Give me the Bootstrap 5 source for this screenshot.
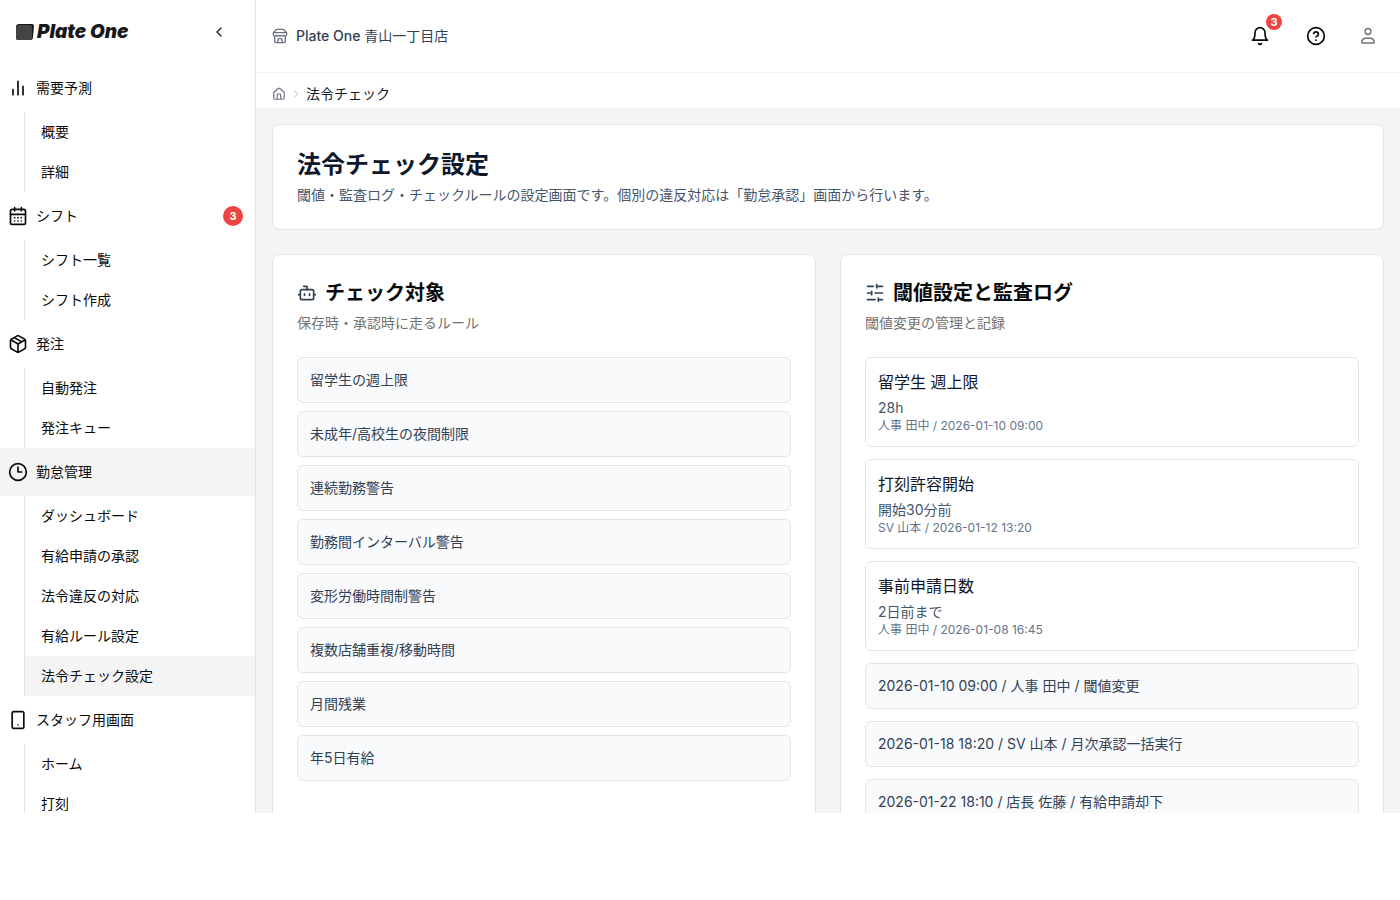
<!DOCTYPE html>
<html lang="ja">
<head>
<meta charset="utf-8">
<meta name="viewport" content="width=device-width, initial-scale=1">
<title>法令チェック設定 | Plate One</title>
<link href="https://cdn.jsdelivr.net/npm/bootstrap@5.3.0/dist/css/bootstrap.min.css" rel="stylesheet">
<style>
  :root { --line: #e5e5e5; --ink: #0f172a; --app-bottom: 87px; }
  body { font-family: Inter, "Noto Sans CJK JP", sans-serif; font-size: 14px; line-height: 20px; color: #0a0a0a; background: #fff; }
  a { color: inherit; text-decoration: none; }
  svg { fill: none; stroke: currentColor; stroke-width: 2; stroke-linecap: round; stroke-linejoin: round; flex: none; }
  .app-shell { height: calc(100vh - var(--app-bottom)); }
  .side { width: 256px; border-right: 1px solid var(--line); }
  .side-head { height: 64px; padding: 0 28px 0 16px; }
  .brand-link { gap: 3px; }
  .brand-name { font: italic 900 19px/24px Inter, sans-serif; color: #18181b; }
  .side-item { height: 48px; padding: 0 12px 0 8px; }
  .side-sub { margin-left: 24px; border-left: 1px solid var(--line); }
  .side-sub a { height: 40px; padding-left: 16px; }
  .side a:hover, .side .current { background: #f4f4f4; }
  .side .brand-link:hover { background: none; }
  .count { background: #ef4444; font-size: 11px; line-height: 20px; width: 20px; height: 20px; padding: 0; font-weight: 700; }
  .count-sm { width: 16px; height: 16px; line-height: 16px; }
  .topbar { height: 73px; padding: 0 22px 0 16px; border-bottom: 1px solid #f4f4f5; color: #334155; }
  .crumbs { padding: 11px 16px 4px; }
  .crumbs .current-page { color: var(--ink); }
  .crumb-sep { color: #b6bac3; }
  .muted-icon { color: #6b7280; }
  .user-icon { color: #737373; }
  .btn .bell-count { position: absolute; top: -12px; right: -12px; }
  .top-actions { gap: 32px; }
  .top-actions .btn { color: #0a0a0a; }
  .page { background: #f3f4f6; }
  .panel { border: 1px solid var(--line); border-radius: 8px; background: #fff; padding: 24px; }
  .panel-raised { box-shadow: 0 1px 2px rgba(0,0,0,.05); }
  h1 { font-size: 24px; line-height: 32px; font-weight: 700; color: var(--ink); }
  h2 { font-size: 20px; line-height: 28px; font-weight: 600; }
  .lede { color: #475569; }
  .desc { color: #737373; margin: 6px 0 24px; }
  .title-icon { color: #334155; }
  .rule { border: 1px solid var(--line); border-radius: 6px; padding: 12px; background: #f8fafc; color: #334155; }
  .setting { border: 1px solid var(--line); border-radius: 6px; padding: 12px; }
  .setting h3 { font-size: 16px; line-height: 24px; font-weight: 400; color: var(--ink); }
  .setting p { color: #475569; }
  .setting .stamp { font-size: 12px; line-height: 16px; color: #64748b; }
  .gap-rows { gap: 12px; }
</style>
</head>
<body>
<div class="app-shell d-flex overflow-hidden">
  <aside class="side flex-shrink-0 overflow-hidden">
    <div class="side-head d-flex align-items-center justify-content-between">
      <a href="#" class="brand-link d-flex align-items-center">
        <svg width="18" height="18" viewBox="0 0 18 18"><path d="M3 1h13q2 0 2 2l-1 11q0 3-3 3H2q-2 0-2-2V4q0-3 3-3z" fill="#18181b" stroke="none"/><rect y="2" width="16" height="15" rx="2" fill="#444" stroke="none"/></svg>
        <span class="brand-name">Plate One</span>
      </a>
      <button type="button" class="btn p-0 border-0 d-flex" aria-label="メニューを閉じる"><svg width="16" height="16" viewBox="0 0 24 24"><path d="m15 18-6-6 6-6"/></svg></button>
    </div>
    <nav aria-label="メインメニュー">
      <a href="#" class="side-item d-flex align-items-center gap-2"><svg width="20" height="20" viewBox="0 0 24 24"><path d="M12 20V4M6 20v-6M18 20V10"/></svg>需要予測</a>
      <div class="side-sub">
        <a href="#" class="d-flex align-items-center">概要</a>
        <a href="#" class="d-flex align-items-center">詳細</a>
      </div>
      <a href="#" class="side-item d-flex align-items-center gap-2"><svg width="20" height="20" viewBox="0 0 24 24"><path d="M8 2v4M16 2v4M3 10h18M8 14h.01M12 14h.01M16 14h.01M8 18h.01M12 18h.01M16 18h.01"/><rect x="3" y="4" width="18" height="18" rx="2"/></svg>シフト<span class="badge rounded-pill count ms-auto">3</span></a>
      <div class="side-sub">
        <a href="#" class="d-flex align-items-center">シフト一覧</a>
        <a href="#" class="d-flex align-items-center">シフト作成</a>
      </div>
      <a href="#" class="side-item d-flex align-items-center gap-2"><svg width="20" height="20" viewBox="0 0 24 24"><path d="M11 21.73a2 2 0 0 0 2 0l7-4A2 2 0 0 0 21 16V8a2 2 0 0 0-1-1.73l-7-4a2 2 0 0 0-2 0l-7 4A2 2 0 0 0 3 8v8a2 2 0 0 0 1 1.73zM12 22V12M3.29 7 12 12l8.71-5M7.5 4.27l9 5.15"/></svg>発注</a>
      <div class="side-sub">
        <a href="#" class="d-flex align-items-center">自動発注</a>
        <a href="#" class="d-flex align-items-center">発注キュー</a>
      </div>
      <a href="#" class="side-item current d-flex align-items-center gap-2"><svg width="20" height="20" viewBox="0 0 24 24"><circle cx="12" cy="12" r="10"/><path d="M12 6v6h4.5"/></svg>勤怠管理</a>
      <div class="side-sub">
        <a href="#" class="d-flex align-items-center">ダッシュボード</a>
        <a href="#" class="d-flex align-items-center">有給申請の承認</a>
        <a href="#" class="d-flex align-items-center">法令違反の対応</a>
        <a href="#" class="d-flex align-items-center">有給ルール設定</a>
        <a href="#" class="d-flex align-items-center current" aria-current="page">法令チェック設定</a>
      </div>
      <a href="#" class="side-item d-flex align-items-center gap-2"><svg width="20" height="20" viewBox="0 0 24 24"><rect x="5" y="2" width="14" height="20" rx="2"/><path d="M12 18h.01"/></svg>スタッフ用画面</a>
      <div class="side-sub">
        <a href="#" class="d-flex align-items-center">ホーム</a>
        <a href="#" class="d-flex align-items-center">打刻</a>
      </div>
    </nav>
  </aside>

  <div class="flex-grow-1 d-flex flex-column overflow-hidden">
    <header class="topbar d-flex align-items-center justify-content-between flex-shrink-0">
      <div class="d-flex align-items-center gap-2">
        <svg class="muted-icon" width="16" height="16" viewBox="0 0 24 24"><path d="m2 7 4.41-4.41A2 2 0 0 1 7.83 2h8.34a2 2 0 0 1 1.42.59L22 7M4 12v8a2 2 0 0 0 2 2h12a2 2 0 0 0 2-2v-8M15 22v-4a2 2 0 0 0-2-2h-2a2 2 0 0 0-2 2v4M2 7h20M22 7v3a2 2 0 0 1-2 2 2.7 2.7 0 0 1-1.59-.63.7.7 0 0 0-.82 0A2.7 2.7 0 0 1 16 12a2.7 2.7 0 0 1-1.59-.63.7.7 0 0 0-.82 0A2.7 2.7 0 0 1 12 12a2.7 2.7 0 0 1-1.59-.63.7.7 0 0 0-.82 0A2.7 2.7 0 0 1 8 12a2.7 2.7 0 0 1-1.59-.63.7.7 0 0 0-.82 0A2.7 2.7 0 0 1 4 12a2 2 0 0 1-2-2V7"/></svg>
        <span><span class="fw-medium">Plate One</span> 青山一丁目店</span>
      </div>
      <div class="top-actions d-flex align-items-center">
        <button type="button" class="btn p-0 border-0 d-flex position-relative me-1" aria-label="通知"><svg width="20" height="20" viewBox="0 0 24 24"><path d="M6 8a6 6 0 0 1 12 0c0 7 3 9 3 9H3s3-2 3-9M10.3 21a1.94 1.94 0 0 0 3.4 0"/></svg><span class="badge rounded-pill count count-sm bell-count">3</span></button>
        <button type="button" class="btn p-0 border-0 d-flex" aria-label="ヘルプ"><svg width="20" height="20" viewBox="0 0 24 24"><circle cx="12" cy="12" r="10"/><path d="M9.09 9a3 3 0 0 1 5.83 1c0 2-3 3-3 3M12 17h.01"/></svg></button>
        <button type="button" class="btn p-0 border-0 d-flex" aria-label="アカウント"><svg class="user-icon" width="20" height="20" viewBox="0 0 20 20"><g stroke-width="1.5"><circle cx="10" cy="5.5" r="2.9"/><path d="M3.9 17.1v-1.3a4 4 0 0 1 4-3.6h4.2a4 4 0 0 1 4 3.6v1.3z"/></g></svg></button>
      </div>
    </header>
    <nav class="crumbs flex-shrink-0" aria-label="パンくず">
      <ol class="list-unstyled d-flex align-items-center mb-0">
        <li><a href="#" class="d-flex muted-icon" aria-label="ホーム"><svg width="14" height="14" viewBox="0 0 24 24"><path d="M15 21v-8a1 1 0 0 0-1-1h-4a1 1 0 0 0-1 1v8M3 10a2 2 0 0 1 .709-1.528l7-5.999a2 2 0 0 1 2.582 0l7 5.999A2 2 0 0 1 21 10v9a2 2 0 0 1-2 2H5a2 2 0 0 1-2-2z"/></svg></a></li>
        <li class="d-flex px-1 crumb-sep" aria-hidden="true"><svg width="12" height="12" viewBox="0 0 24 24"><path d="m9 18 6-6-6-6"/></svg></li>
        <li class="current-page" aria-current="page">法令チェック</li>
      </ol>
    </nav>

    <main class="page flex-grow-1 overflow-hidden p-3">
      <section class="panel mb-4">
        <h1 class="mb-1">法令チェック設定</h1>
        <p class="lede mb-0">閾値・監査ログ・チェックルールの設定画面です。個別の違反対応は「勤怠承認」画面から行います。</p>
      </section>
      <div class="row g-4">
        <div class="col-6">
          <section class="panel panel-raised h-100">
            <div class="d-flex align-items-center gap-2">
              <svg class="title-icon" width="20" height="20" viewBox="0 0 24 24"><path d="M12 8V4H8M2 14h2M20 14h2M15 13v2M9 13v2"/><rect x="4" y="8" width="16" height="12" rx="2"/></svg>
              <h2 class="mb-0">チェック対象</h2>
            </div>
            <p class="desc">保存時・承認時に走るルール</p>
            <ul class="list-unstyled d-grid gap-2 mb-0">
              <li class="rule">留学生の週上限</li>
              <li class="rule">未成年/高校生の夜間制限</li>
              <li class="rule">連続勤務警告</li>
              <li class="rule">勤務間インターバル警告</li>
              <li class="rule">変形労働時間制警告</li>
              <li class="rule">複数店舗重複/移動時間</li>
              <li class="rule">月間残業</li>
              <li class="rule">年5日有給</li>
            </ul>
          </section>
        </div>
        <div class="col-6">
          <section class="panel panel-raised h-100">
            <div class="d-flex align-items-center gap-2">
              <svg class="title-icon" width="20" height="20" viewBox="0 0 24 24"><path d="M21 4h-7M10 4H3M21 12h-9M8 12H3M21 20h-5M12 20H3M14 2v4M8 10v4M16 18v4"/></svg>
              <h2 class="mb-0">閾値設定と監査ログ</h2>
            </div>
            <p class="desc">閾値変更の管理と記録</p>
            <div class="d-grid gap-rows">
              <article class="setting"><h3 class="mb-1">留学生 週上限</h3><p class="mb-0">28h</p><p class="stamp mb-0">人事 田中 / 2026-01-10 09:00</p></article>
              <article class="setting"><h3 class="mb-1">打刻許容開始</h3><p class="mb-0">開始30分前</p><p class="stamp mb-0">SV 山本 / 2026-01-12 13:20</p></article>
              <article class="setting"><h3 class="mb-1">事前申請日数</h3><p class="mb-0">2日前まで</p><p class="stamp mb-0">人事 田中 / 2026-01-08 16:45</p></article>
              <div class="rule">2026-01-10 09:00 / 人事 田中 / 閾値変更</div>
              <div class="rule">2026-01-18 18:20 / SV 山本 / 月次承認一括実行</div>
              <div class="rule">2026-01-22 18:10 / 店長 佐藤 / 有給申請却下</div>
            </div>
          </section>
        </div>
      </div>
    </main>
  </div>
</div>
<script src="https://cdn.jsdelivr.net/npm/bootstrap@5.3.0/dist/js/bootstrap.bundle.min.js"></script>
</body>
</html>
